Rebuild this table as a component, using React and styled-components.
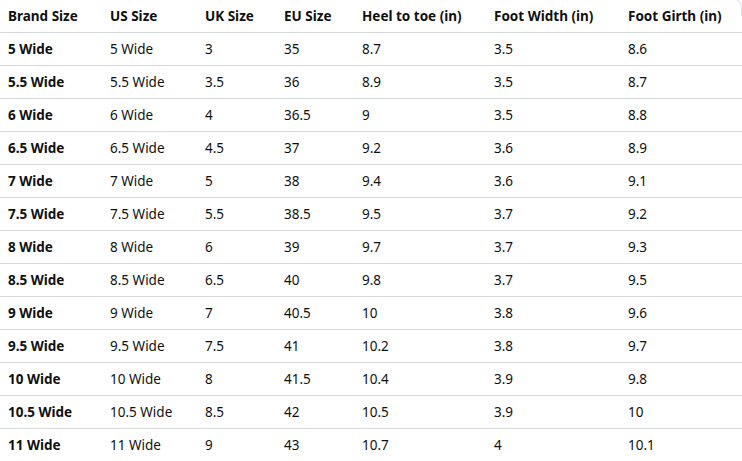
import React from 'react';
import styled, { createGlobalStyle } from 'styled-components';

const GlobalStyle = createGlobalStyle`
  html, body {
    margin: 0;
    padding: 0;
    background: #fff;
  }
  body {
    font-family: "Noto Sans", "Open Sans", Arial, sans-serif;
    color: #0f1111;
  }
`;

const columns = [
  { label: 'Brand Size', width: 102 },
  { label: 'US Size', width: 95 },
  { label: 'UK Size', width: 79 },
  { label: 'EU Size', width: 78 },
  { label: 'Heel to toe (in)', width: 132 },
  { label: 'Foot Width (in)', width: 134 },
  { label: 'Foot Girth (in)', width: 122 },
];

const rows = [
  ['5 Wide', '5 Wide', '3', '35', '8.7', '3.5', '8.6'],
  ['5.5 Wide', '5.5 Wide', '3.5', '36', '8.9', '3.5', '8.7'],
  ['6 Wide', '6 Wide', '4', '36.5', '9', '3.5', '8.8'],
  ['6.5 Wide', '6.5 Wide', '4.5', '37', '9.2', '3.6', '8.9'],
  ['7 Wide', '7 Wide', '5', '38', '9.4', '3.6', '9.1'],
  ['7.5 Wide', '7.5 Wide', '5.5', '38.5', '9.5', '3.7', '9.2'],
  ['8 Wide', '8 Wide', '6', '39', '9.7', '3.7', '9.3'],
  ['8.5 Wide', '8.5 Wide', '6.5', '40', '9.8', '3.7', '9.5'],
  ['9 Wide', '9 Wide', '7', '40.5', '10', '3.8', '9.6'],
  ['9.5 Wide', '9.5 Wide', '7.5', '41', '10.2', '3.8', '9.7'],
  ['10 Wide', '10 Wide', '8', '41.5', '10.4', '3.9', '9.8'],
  ['10.5 Wide', '10.5 Wide', '8.5', '42', '10.5', '3.9', '10'],
  ['11 Wide', '11 Wide', '9', '43', '10.7', '4', '10.1'],
];

const Frame = styled.div`
  position: relative;
  width: 742px;
  height: 461px;
  overflow: hidden;
  background: #fff;
`;

// only the top-right corner of the surrounding card shows in the crop
const CardCorner = styled.div`
  position: absolute;
  top: -1px;
  right: 0;
  width: 16px;
  height: 16px;
  border-top: 1px solid #e3e6e6;
  border-right: 1px solid #e3e6e6;
  border-top-right-radius: 8px;
  pointer-events: none;
`;

const Table = styled.table`
  width: 742px;
  border-collapse: collapse;
  table-layout: fixed;
  font-size: 13.5px;
`;

const HeadCell = styled.th`
  height: 32px;
  padding: 0 8px;
  text-align: left;
  font-weight: 700;
  white-space: nowrap;
  border-bottom: 1px solid #d5d9d9;
`;

const Row = styled.tr`
  height: 33px;
  border-bottom: ${props => (props.last ? 'none' : '1px solid #d5d9d9')};
`;

const Cell = styled.td`
  padding: 0 8px;
  white-space: nowrap;
  font-weight: ${props => (props.strong ? 700 : 400)};
`;

export default function App() {
  return (
    <Frame>
      <GlobalStyle />
      <Table>
        <colgroup>
          {columns.map(col => (
            <col key={col.label} style={{ width: col.width }} />
          ))}
        </colgroup>
        <thead>
          <tr>
            {columns.map(col => (
              <HeadCell key={col.label}>{col.label}</HeadCell>
            ))}
          </tr>
        </thead>
        <tbody>
          {rows.map((row, i) => (
            <Row key={row[0]} last={i === rows.length - 1}>
              {row.map((value, j) => (
                <Cell key={j} strong={j === 0}>{value}</Cell>
              ))}
            </Row>
          ))}
        </tbody>
      </Table>
      <CardCorner />
    </Frame>
  );
}
